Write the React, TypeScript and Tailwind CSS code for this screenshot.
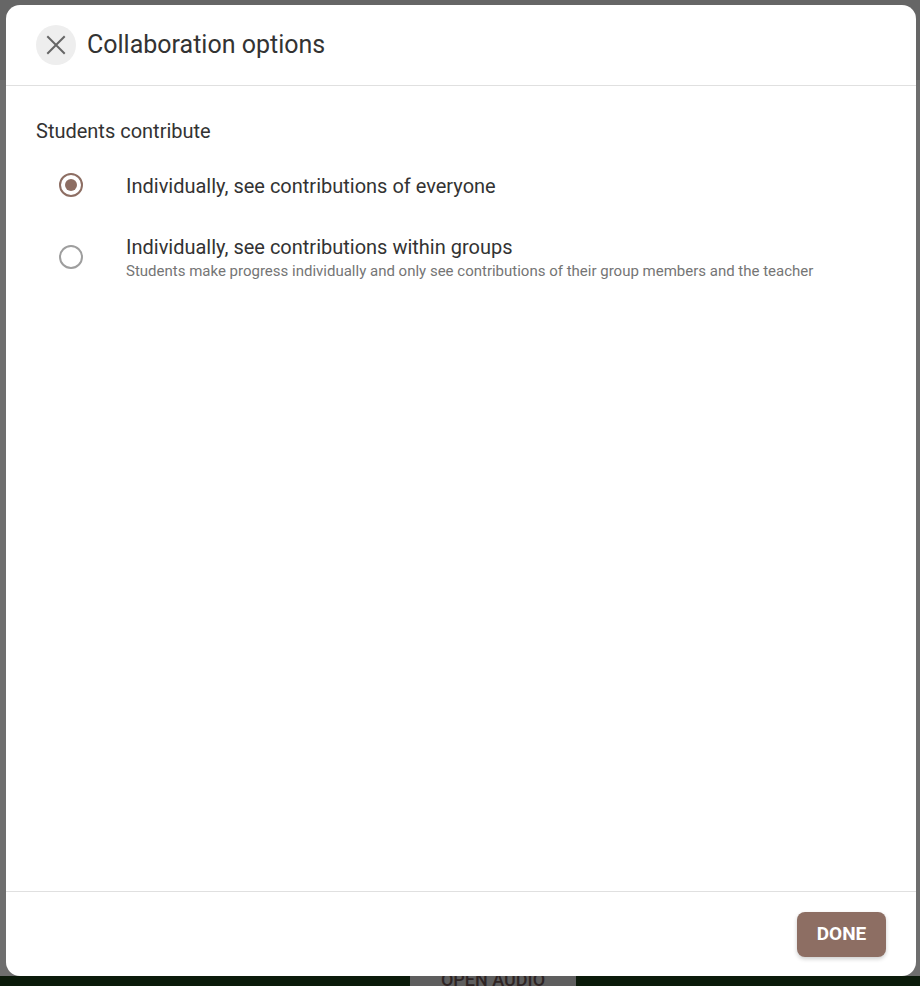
import { useState } from "react";

const options = [
    { id: "everyone", label: "Individually, see contributions of everyone", hint: "" },
    {
        id: "groups",
        label: "Individually, see contributions within groups",
        hint: "Students make progress individually and only see contributions of their group members and the teacher",
    },
];

function Radio({ checked }: { checked: boolean }) {
    return (
        <span
            className={
                checked
                    ? "w-[24px] h-[24px] rounded-full border-2 border-[#8d6e63] flex items-center justify-center"
                    : "w-[24px] h-[24px] rounded-full border-2 border-[#9e9e9e] flex items-center justify-center"
            }
        >
            {checked && <span className="w-[12px] h-[12px] rounded-full bg-[#8d6e63]"></span>}
        </span>
    );
}

function App() {
    const [selected, setSelected] = useState("everyone");
    return (
        <div className="relative w-[920px] h-[986px] bg-[#6e6e6e] overflow-hidden flex flex-col font-['Roboto',sans-serif]">
            <div className="h-[80px] bg-[#666666]"></div>
            <div className="flex-1"></div>
            <div className="h-[10px] bg-[#0b1a0a] flex">
                <div className="ml-[410px] w-[166px] bg-[#5e5e5e] flex justify-center overflow-hidden">
                    <span className="text-[#2e2424] text-[18px] font-medium leading-[18px] -mt-[5px]">OPEN AUDIO</span>
                </div>
            </div>

            <div className="absolute left-[6px] top-[5px] w-[910px] h-[971px] bg-white rounded-[14px] flex flex-col">
                <div className="h-[81px] border-b border-[#e0e0e0] flex items-center pl-[30px] gap-[11px]">
                    <button className="w-[40px] h-[40px] rounded-full bg-[#eeeeee] flex items-center justify-center">
                        <svg width="20" height="20" viewBox="0 0 20 20" stroke="#666666" strokeWidth="2" strokeLinecap="square">
                            <path d="M2 2 L18 18 M18 2 L2 18" />
                        </svg>
                    </button>
                    <h1 className="text-[25px] text-[#333333] leading-[30px]">Collaboration options</h1>
                </div>

                <div className="flex-1 px-[30px] pt-[33px]">
                    <p className="text-[20px] leading-[24px] text-[#333333]">Students contribute</p>
                    <div className="mt-[19px] flex flex-col gap-[24px]">
                        {options.map((o) => (
                            <div
                                key={o.id}
                                className="flex items-center min-h-[48px] cursor-pointer"
                                onClick={() => setSelected(o.id)}
                            >
                                <div className="w-[70px] pl-[23px] flex items-center -mt-[2px]">
                                    <Radio checked={selected === o.id} />
                                </div>
                                <div className="pl-[20px]">
                                    <p className="text-[20px] leading-[24px] text-[#333333]">{o.label}</p>
                                    {o.hint && <p className="text-[15px] leading-[20px] text-[#757575] mt-[2px]">{o.hint}</p>}
                                </div>
                            </div>
                        ))}
                    </div>
                </div>

                <div className="h-[85px] border-t border-[#e0e0e0] flex items-center justify-end pr-[30px]">
                    <button className="w-[89px] h-[45px] rounded-[8px] bg-[#8d6e63] text-white text-[19px] font-bold shadow-[0_2px_4px_rgba(0,0,0,0.2)]">
                        DONE
                    </button>
                </div>
            </div>
        </div>
    );
}

export default App;
